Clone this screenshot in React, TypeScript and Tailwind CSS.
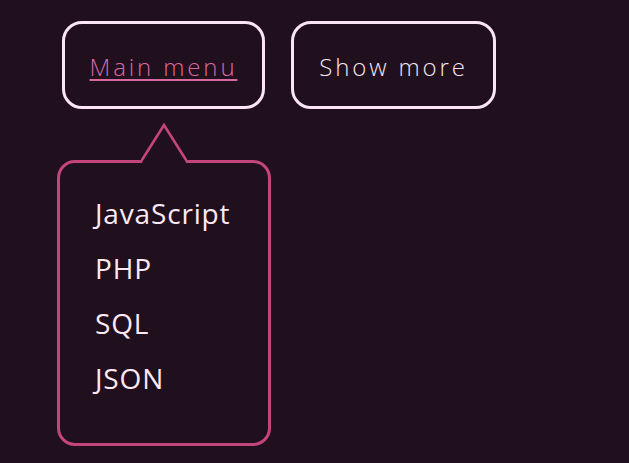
import { useState } from 'react';

const ITEMS = ['JavaScript', 'PHP', 'SQL', 'JSON'];

const App = () => {
  const [open] = useState(true);

  return (
    <div
      className="min-h-[463px] w-full bg-[#200f1d] pl-[62px] pt-[21px]"
      style={{ fontFamily: '"Open Sans", "Liberation Sans", sans-serif' }}
    >
      <div className="flex gap-[26px]">
        <button
          type="button"
          className="flex h-[88px] w-[203px] items-center justify-center rounded-[20px] border-[3px] border-[#fbe4f3] pt-[4px] text-[24px] font-light tracking-[0.12em] text-[#d868a2] underline decoration-[1.5px] underline-offset-[3px]"
        >
          Main menu
        </button>
        <button
          type="button"
          className="flex h-[88px] w-[205px] items-center justify-center rounded-[20px] border-[3px] border-[#fbe4f3] pt-[4px] text-[24px] font-light tracking-[0.12em] text-[#f6e4f0]"
        >
          Show more
        </button>
      </div>

      {open && (
        <div className="relative ml-[-5px] mt-[51px] h-[286px] w-[214px] rounded-[18px] border-[3px] border-[#c3457c] pl-[35px] pt-[29px]">
          <svg
            className="absolute left-[81px] top-[-40px]"
            width="46"
            height="42"
            viewBox="0 0 46 42"
          >
            <polygon points="1,37 23,1 45,37 45,42 1,42" fill="#200f1d" />
            <polyline
              points="0,38.5 23,2 46,38.5"
              fill="none"
              stroke="#c3457c"
              strokeWidth="2.6"
              strokeLinejoin="miter"
            />
          </svg>
          <ul className="flex flex-col gap-[13px]">
            {ITEMS.map((item) => (
              <li key={item} className="text-[28px] leading-[42px] tracking-[0.03em] text-[#fde9f5]">
                {item}
              </li>
            ))}
          </ul>
        </div>
      )}
    </div>
  );
};

export default App;
